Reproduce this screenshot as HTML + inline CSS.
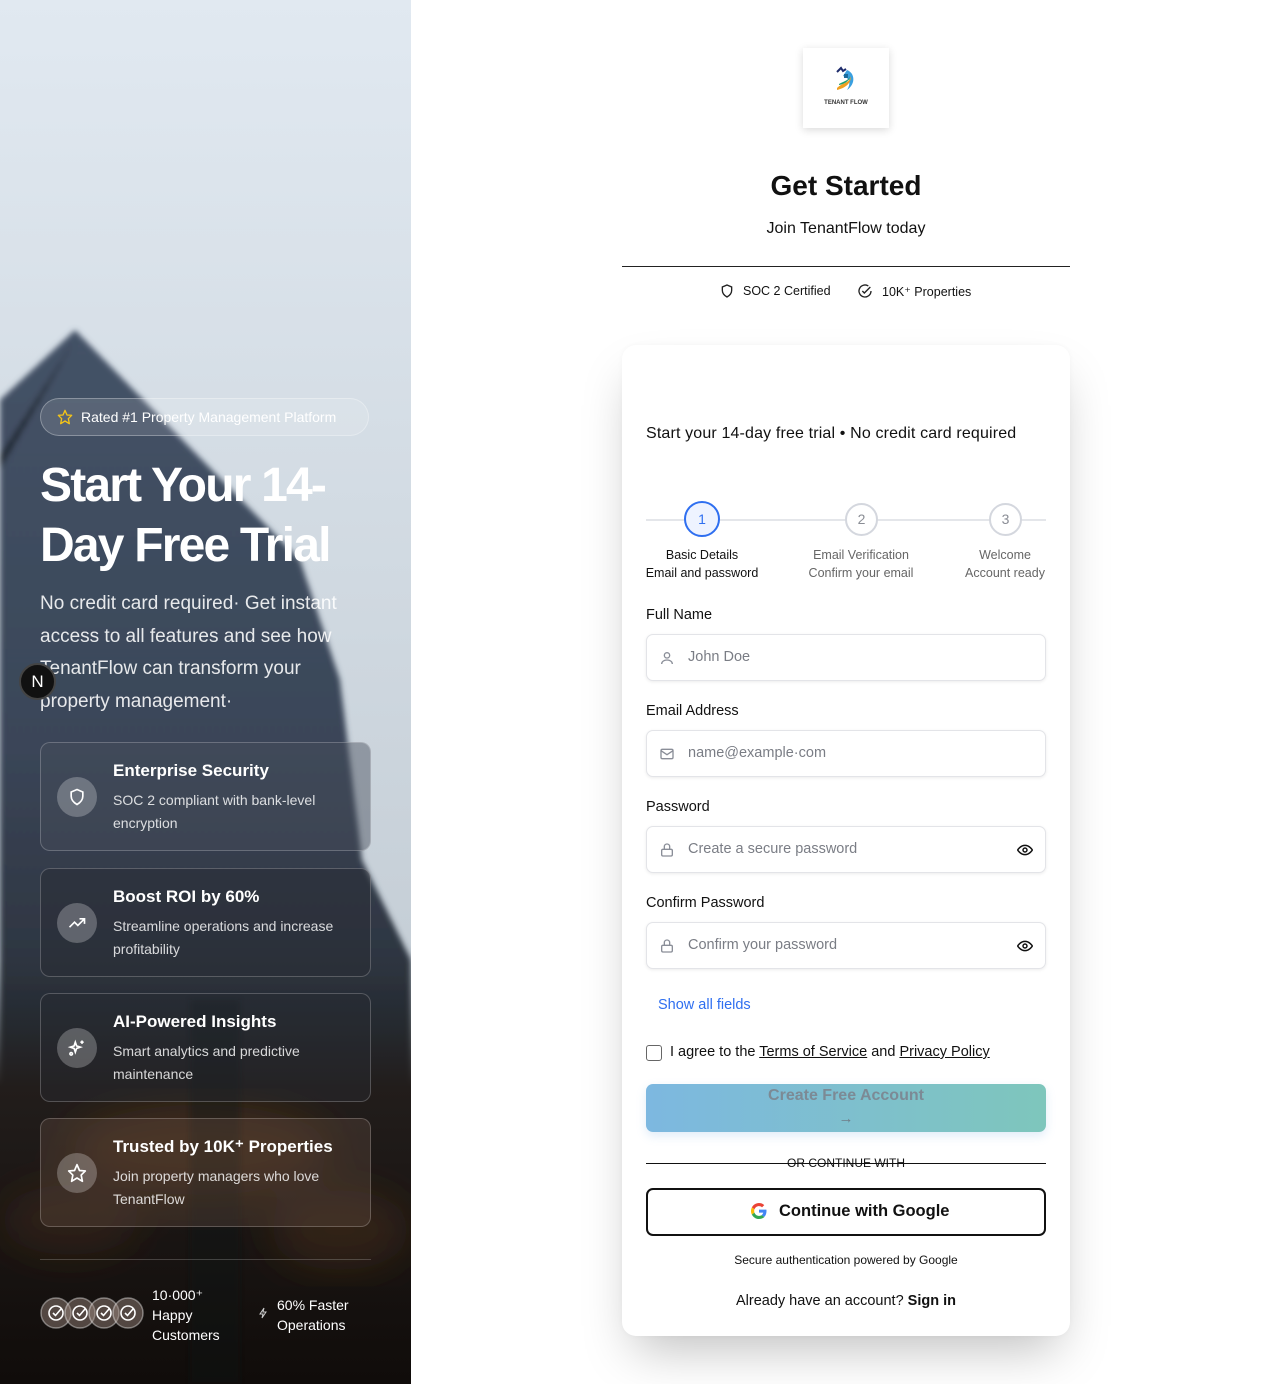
<!DOCTYPE html>
<html><head><meta charset="utf-8">
<style>
*{box-sizing:border-box;margin:0;padding:0}
body{width:1280px;height:1384px;position:relative;background:#fff;font-family:"Liberation Sans",sans-serif;overflow:hidden;color:#111}
.abs{position:absolute}
#left{position:absolute;left:0;top:0;width:411px;height:1384px;overflow:hidden}
.card{position:absolute;left:40px;width:331px;height:109px;border:1px solid rgba(255,255,255,.22);border-radius:10px;background:rgba(40,42,48,.45)}
.card .ic{position:absolute;left:16px;top:34px;width:40px;height:40px;border-radius:50%;background:rgba(255,255,255,.25);display:flex;align-items:center;justify-content:center}
.card h3{position:absolute;left:72px;top:18px;font-size:17px;color:#fff;font-weight:bold}
.card p{position:absolute;left:72px;top:46px;width:250px;font-size:14px;line-height:23px;color:rgba(255,255,255,.82)}
.lbl{position:absolute;left:646px;font-size:14.5px;color:#111}
.inp{position:absolute;left:646px;width:400px;height:47px;border:1.5px solid #e3e4e8;border-radius:7px;box-shadow:0 1px 3px rgba(0,0,0,.08);background:#fff}
.inp span{position:absolute;left:41px;top:14px;font-size:14.5px;color:#7a7d85}
.inp svg.l{position:absolute;left:12px;top:15px}
.inp svg.r{position:absolute;right:12px;top:16px}
.step{position:absolute;width:36px;height:36px;border-radius:50%;border:2px solid #d4d7de;background:#fff;text-align:center;line-height:32px;font-size:14px;color:#8a8d95}
.sl{position:absolute;text-align:center;font-size:12.5px;line-height:18px;color:#666;width:160px}
</style></head><body>

<div id="left">
<svg width="411" height="1384" style="position:absolute;left:0;top:0">
<defs>
<linearGradient id="sky" x1="0" y1="0" x2="0" y2="1">
<stop offset="0" stop-color="#e1e9f1"/><stop offset="0.5" stop-color="#cdd6de"/><stop offset="1" stop-color="#b9c2ca"/></linearGradient>
<linearGradient id="bld" x1="0" y1="0" x2="0" y2="1">
<stop offset="0" stop-color="#3f4d62"/><stop offset="0.4" stop-color="#344052"/><stop offset="0.65" stop-color="#232a33"/><stop offset="1" stop-color="#15181c"/></linearGradient>
<linearGradient id="bot" x1="0" y1="0" x2="0" y2="1">
<stop offset="0" stop-color="#1f262e" stop-opacity="0"/><stop offset="0.3" stop-color="#221d1b"/><stop offset="1" stop-color="#100c0a"/></linearGradient>
<pattern id="grid" width="7" height="7" patternUnits="userSpaceOnUse"><rect x="1" y="1" width="4" height="4" fill="rgba(190,200,215,.12)"/></pattern>
<filter id="bl"><feGaussianBlur stdDeviation="3"/></filter>
<filter id="bl2"><feGaussianBlur stdDeviation="20"/></filter>
</defs>
<rect width="411" height="1384" fill="url(#sky)"/>
<g filter="url(#bl)">
<polygon points="0,400 75,330 300,560 340,680 362,860 411,960 411,1384 0,1384" fill="url(#bld)"/>
<polygon points="0,400 75,330 300,560 340,680 362,860 411,960 411,1384 0,1384" fill="url(#grid)"/>
<polygon points="0,470 75,340 62,360 0,455" fill="#222a36"/>
</g>
<rect x="0" y="960" width="411" height="424" fill="url(#bot)"/>
<g filter="url(#bl2)">
<ellipse cx="200" cy="1150" rx="130" ry="45" fill="#7a4a22" opacity=".35"/>
<ellipse cx="340" cy="1230" rx="70" ry="40" fill="#6a4020" opacity=".3"/>
<ellipse cx="70" cy="1220" rx="70" ry="35" fill="#5a3a20" opacity=".3"/>
</g>
<rect x="190" y="1000" width="50" height="384" fill="#0f1418" opacity=".35" filter="url(#bl)"/>
</svg>

<div class="abs" style="left:40px;top:398px;width:329px;height:38px;border-radius:19px;border:1px solid rgba(255,255,255,.3);background:rgba(255,255,255,.12)"></div>
<svg class="abs" style="left:57px;top:409px" width="16" height="16" viewBox="0 0 24 24" fill="none" stroke="#f5c518" stroke-width="2" stroke-linejoin="round"><polygon points="12,2 15,9 22,9.5 17,14.5 18.5,22 12,18 5.5,22 7,14.5 2,9.5 9,9"/></svg>
<div class="abs" style="left:81px;top:409px;font-size:14px;color:#fff">Rated #1 Property Management Platform</div>
<div class="abs" style="left:40px;top:456px;font-size:48px;line-height:60px;font-weight:bold;color:#fff;letter-spacing:-1.8px;width:340px">Start Your 14-Day Free Trial</div>
<div class="abs" style="left:40px;top:588px;width:320px;font-size:19px;line-height:32.5px;color:rgba(255,255,255,.88)">No credit card required· Get instant access to all features and see how TenantFlow can transform your property management·</div>
<div class="abs" style="left:19px;top:663px;width:37px;height:37px;border-radius:50%;background:#111;border:2px solid #444;color:#fff;text-align:center;line-height:33px;font-size:17px">N</div>

<div class="card" style="top:742px;background:rgba(70,78,90,.45)"><div class="ic"><svg width="20" height="20" viewBox="0 0 24 24" fill="none" stroke="#fff" stroke-width="2"><path d="M12 3l7 3v5c0 5-3.5 8-7 10-3.5-2-7-5-7-10V6z"/></svg></div><h3>Enterprise Security</h3><p>SOC 2 compliant with bank-level encryption</p></div>
<div class="card" style="top:868px"><div class="ic"><svg width="20" height="20" viewBox="0 0 24 24" fill="none" stroke="#fff" stroke-width="2"><path d="M3 17l6-6 4 4 8-8M15 7h6v6"/></svg></div><h3>Boost ROI by 60%</h3><p>Streamline operations and increase profitability</p></div>
<div class="card" style="top:993px"><div class="ic"><svg width="20" height="20" viewBox="0 0 24 24" fill="none" stroke="#fff" stroke-width="2"><path d="M10 5l1.5 4.5L16 11l-4.5 1.5L10 17l-1.5-4.5L4 11l4.5-1.5z M18 3v4M16 5h4"/><circle cx="5" cy="19" r="1.5"/></svg></div><h3>AI-Powered Insights</h3><p>Smart analytics and predictive maintenance</p></div>
<div class="card" style="top:1118px;background:rgba(90,70,60,.4)"><div class="ic"><svg width="20" height="20" viewBox="0 0 24 24" fill="none" stroke="#fff" stroke-width="2" stroke-linejoin="round"><polygon points="12,2 15,9 22,9.5 17,14.5 18.5,22 12,18 5.5,22 7,14.5 2,9.5 9,9"/></svg></div><h3>Trusted by 10K⁺ Properties</h3><p>Join property managers who love TenantFlow</p></div>

<div class="abs" style="left:40px;top:1259px;width:331px;height:1px;background:rgba(255,255,255,.2)"></div>
<svg class="abs" style="left:40px;top:1297px" width="105" height="33">
<g fill="rgba(160,140,130,.45)" stroke="rgba(255,255,255,.4)" stroke-width="1.5">
<circle cx="16" cy="16" r="15"/><circle cx="40" cy="16" r="15"/><circle cx="64" cy="16" r="15"/><circle cx="88" cy="16" r="15"/></g>
<g fill="none" stroke="#fff" stroke-width="1.6">
<circle cx="16" cy="16" r="7"/><path d="M13 16l2.5 2.5L21 12"/>
<circle cx="40" cy="16" r="7"/><path d="M37 16l2.5 2.5L45 12"/>
<circle cx="64" cy="16" r="7"/><path d="M61 16l2.5 2.5L69 12"/>
<circle cx="88" cy="16" r="7"/><path d="M85 16l2.5 2.5L93 12"/></g></svg>
<div class="abs" style="left:152px;top:1285px;font-size:14px;line-height:20px;color:#fff">10·000⁺<br>Happy<br>Customers</div>
<svg class="abs" style="left:258px;top:1307px" width="10" height="12" viewBox="0 0 10 12" fill="none" stroke="#ccc" stroke-width="1"><path d="M6 1L2 7h3l-1 4 4-6H5z"/></svg>
<div class="abs" style="left:277px;top:1295px;font-size:14px;line-height:20px;color:#fff">60% Faster<br>Operations</div>
</div>

<!-- right -->
<div class="abs" style="left:803px;top:48px;width:86px;height:80px;background:#fff;box-shadow:0 2px 8px rgba(0,0,0,.15)">
<svg class="abs" style="left:30px;top:18px" width="26" height="28" viewBox="0 0 26 28"><path d="M4 6l4-4 2 3 3-2" stroke="#1d2b6b" stroke-width="2" fill="none"/><path d="M14 4c8 3 9 14 0 20 4-6 3-12-4-14" fill="#3aa0e0"/><path d="M4 22c6-6 12-4 14-12 0 8-6 12-14 14z" fill="#f0a020"/><path d="M6 18c5-3 9-3 11-8-1 6-6 8-11 9z" fill="#20a070"/><rect x="11" y="8" width="4" height="4" fill="#1d6b9b"/></svg>
<div class="abs" style="left:0;width:86px;top:52px;text-align:center;font-size:6px;font-weight:bold;color:#333">TENANT FLOW</div>
</div>
<div class="abs" style="left:622px;width:448px;top:170px;text-align:center;font-size:28px;font-weight:bold;color:#111">Get Started</div>
<div class="abs" style="left:622px;width:448px;top:220px;text-align:center;font-size:16px;color:#111">Join TenantFlow today</div>
<div class="abs" style="left:622px;top:266px;width:448px;height:1px;background:#222"></div>
<svg class="abs" style="left:719px;top:283px" width="16" height="16" viewBox="0 0 24 24" fill="none" stroke="#222" stroke-width="2"><path d="M12 3l7 3v5c0 5-3.5 8-7 10-3.5-2-7-5-7-10V6z"/></svg>
<div class="abs" style="left:743px;top:284px;font-size:12.5px;color:#111">SOC 2 Certified</div>
<svg class="abs" style="left:857px;top:283px" width="16" height="16" viewBox="0 0 24 24" fill="none" stroke="#222" stroke-width="2"><path d="M21 12a9 9 0 1 1-4-7.5"/><path d="M8 12l3 3 9-9"/></svg>
<div class="abs" style="left:882px;top:284px;font-size:12.5px;color:#111">10K⁺ Properties</div>

<div class="abs" style="left:622px;top:345px;width:448px;height:991px;border-radius:14px;background:#fff;box-shadow:0 25px 50px -12px rgba(0,0,0,.25),0 0 6px rgba(0,0,0,.03)"></div>
<div class="abs" style="left:646px;top:425px;font-size:16px;color:#111;letter-spacing:.15px">Start your 14-day free trial • No credit card required</div>

<div class="abs" style="left:646px;top:519px;width:400px;height:2px;background:#e4e6ea"></div>
<div class="step" style="left:684px;top:501px;border-color:#2f6ff0;background:#eef3ff;color:#2f6ff0">1</div>
<div class="step" style="left:845px;top:503px;width:33px;height:33px;line-height:29px">2</div>
<div class="step" style="left:989px;top:503px;width:33px;height:33px;line-height:29px">3</div>
<div class="sl" style="left:622px;top:546px;color:#111">Basic Details<br>Email and password</div>
<div class="sl" style="left:781px;top:546px">Email Verification<br>Confirm your email</div>
<div class="sl" style="left:925px;top:546px">Welcome<br>Account ready</div>

<div class="lbl" style="top:607px">Full Name</div>
<div class="inp" style="top:634px"><svg class="l" width="16" height="16" viewBox="0 0 24 24" fill="none" stroke="#8a8e98" stroke-width="2"><circle cx="12" cy="8" r="4"/><path d="M4 21c0-4 4-6 8-6s8 2 8 6"/></svg><span>John Doe</span></div>
<div class="lbl" style="top:703px">Email Address</div>
<div class="inp" style="top:730px"><svg class="l" width="16" height="16" viewBox="0 0 24 24" fill="none" stroke="#8a8e98" stroke-width="2"><rect x="3" y="5" width="18" height="14" rx="2"/><path d="M3 7l9 6 9-6"/></svg><span>name@example·com</span></div>
<div class="lbl" style="top:799px">Password</div>
<div class="inp" style="top:826px"><svg class="l" width="16" height="16" viewBox="0 0 24 24" fill="none" stroke="#8a8e98" stroke-width="2"><rect x="4" y="11" width="16" height="10" rx="2"/><path d="M8 11V7a4 4 0 0 1 8 0v4"/></svg><span>Create a secure password</span><svg class="r" width="16" height="14" viewBox="0 0 24 20" fill="none" stroke="#111" stroke-width="2.2"><path d="M1 10s4-7 11-7 11 7 11 7-4 7-11 7S1 10 1 10z"/><circle cx="12" cy="10" r="3"/></svg></div>
<div class="lbl" style="top:895px">Confirm Password</div>
<div class="inp" style="top:922px"><svg class="l" width="16" height="16" viewBox="0 0 24 24" fill="none" stroke="#8a8e98" stroke-width="2"><rect x="4" y="11" width="16" height="10" rx="2"/><path d="M8 11V7a4 4 0 0 1 8 0v4"/></svg><span>Confirm your password</span><svg class="r" width="16" height="14" viewBox="0 0 24 20" fill="none" stroke="#111" stroke-width="2.2"><path d="M1 10s4-7 11-7 11 7 11 7-4 7-11 7S1 10 1 10z"/><circle cx="12" cy="10" r="3"/></svg></div>

<div class="abs" style="left:658px;top:997px;font-size:14.5px;color:#2f6ff0">Show all fields</div>
<div class="abs" style="left:646px;top:1045px;width:16px;height:16px;border:1.5px solid #666;border-radius:3px"></div>
<div class="abs" style="left:670px;top:1044px;font-size:14.5px;color:#111">I agree to the <u>Terms of Service</u> and <u>Privacy Policy</u></div>
<div class="abs" style="left:646px;top:1084px;width:400px;height:48px;border-radius:7px;background:linear-gradient(90deg,#7db8e0,#7ec6bc);box-shadow:0 4px 10px rgba(100,160,220,.2)"></div>
<div class="abs" style="left:646px;width:400px;top:1087px;text-align:center;font-size:16px;font-weight:bold;color:#7c8a95">Create Free Account</div>
<div class="abs" style="left:646px;width:400px;top:1110px;text-align:center;font-size:15px;color:#6f7d88">→</div>
<div class="abs" style="left:646px;top:1163px;width:400px;height:1px;background:#111"></div>
<div class="abs" style="left:646px;width:400px;top:1156px;text-align:center;font-size:12px;color:#111">OR CONTINUE WITH</div>
<div class="abs" style="left:646px;top:1188px;width:400px;height:48px;border:2px solid #111;border-radius:7px;background:#fff"></div>
<svg class="abs" style="left:751px;top:1203px" width="16" height="16" viewBox="0 0 48 48"><path fill="#EA4335" d="M24 9.5c3.5 0 6.6 1.2 9 3.5l6.7-6.7C35.6 2.4 30.2 0 24 0 14.6 0 6.6 5.4 2.6 13.2l7.8 6C12.3 13.6 17.7 9.5 24 9.5z"/><path fill="#4285F4" d="M46.5 24.5c0-1.6-.1-3.1-.4-4.5H24v9h12.7c-.6 3-2.3 5.5-4.8 7.2l7.6 5.9c4.4-4.1 7-10.1 7-17.6z"/><path fill="#FBBC05" d="M10.4 28.8c-.5-1.5-.8-3.1-.8-4.8s.3-3.300.8-4.8l-7.8-6C.9 16.5 0 20.1 0 24s.9 7.5 2.6 10.8z"/><path fill="#34A853" d="M24 48c6.5 0 11.9-2.1 15.9-5.8l-7.6-5.9c-2.1 1.4-4.9 2.3-8.3 2.3-6.300 0-11.7-4.1-13.6-9.8l-7.8 6C6.6 42.6 14.6 48 24 48z"/></svg>
<div class="abs" style="left:779px;top:1202px;font-size:16.5px;font-weight:bold;color:#111">Continue with Google</div>
<div class="abs" style="left:622px;width:448px;top:1253px;text-align:center;font-size:12px;color:#111">Secure authentication powered by Google</div>
<div class="abs" style="left:622px;width:448px;top:1293px;text-align:center;font-size:14.5px;color:#111">Already have an account? <b style="font-weight:600">Sign in</b></div>
</body></html>
